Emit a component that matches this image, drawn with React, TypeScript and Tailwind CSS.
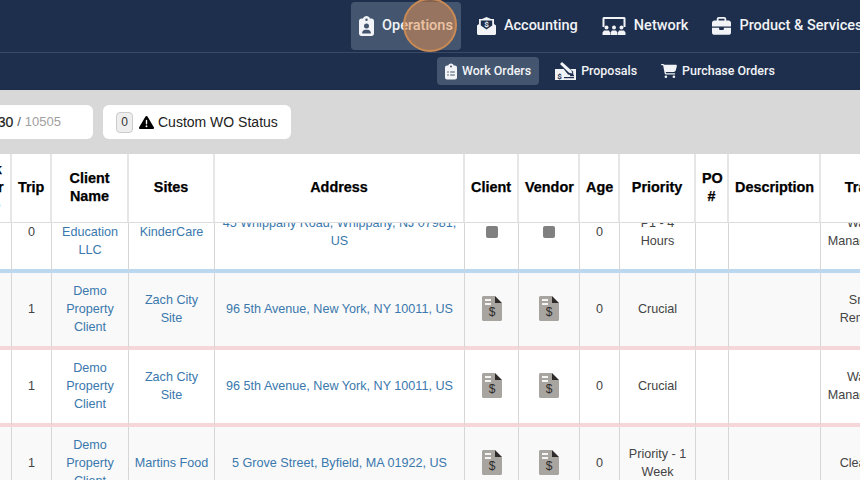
import { FaBriefcase, FaCartShopping, FaClipboardList, FaClipboardUser, FaTriangleExclamation } from "react-icons/fa6";

const colWidths = [54, 40, 77, 86, 250, 54, 61, 40, 76, 33, 92, 88];
const headers = ["Work Order Type", "Trip", "Client Name", "Sites", "Address", "Client", "Vendor", "Age", "Priority", "PO #", "Description", "Trade"];

const rows = [
  { trip: "0", client: "Early Education LLC", site: "KinderCare", address: "45 Whippany Road, Whippany, NJ 07981, US", priority: "P1 - 4 Hours", trade: "Waste Management", bg: "bg-white", line: "border-b-[#bcd8f0]", placeholder: true },
  { trip: "1", client: "Demo Property Client", site: "Zach City Site", address: "96 5th Avenue, New York, NY 10011, US", priority: "Crucial", trade: "Snow Removal", bg: "bg-[#f9f9f9]", line: "border-b-[#f5d6d9]", placeholder: false },
  { trip: "1", client: "Demo Property Client", site: "Zach City Site", address: "96 5th Avenue, New York, NY 10011, US", priority: "Crucial", trade: "Waste Management", bg: "bg-white", line: "border-b-[#f5d6d9]", placeholder: false },
  { trip: "1", client: "Demo Property Client", site: "Martins Food", address: "5 Grove Street, Byfield, MA 01922, US", priority: "Priority - 1 Week", trade: "Cleaning", bg: "bg-[#f9f9f9]", line: "border-b-[#f5d6d9]", placeholder: false },
];

function EnvelopeDollarIcon() {
  return (
    <svg width="19" height="18" viewBox="0 0 19 18" fill="#f1f3f6">
      <path d="M0 8.500 2 7V2L5 2 9.500 0 14 2h3v5l2 1.500V17l-1 1H1l-1-1z" />
      <path d="M3.800 3.500h11.400v5.100L9.500 12.600 3.800 8.600z" fill="#1e2f4d" />
      <text x="9.500" y="9.500" fontSize="8" fontWeight="700" textAnchor="middle" fill="#f1f3f6" fontFamily="Roboto, sans-serif">$</text>
    </svg>
  );
}

function NetworkIcon() {
  return (
    <svg width="24" height="18" viewBox="0 0 24 18" fill="#f1f3f6">
      <path d="M1.500 0h21l1 1v9h-2V2h-19v8h-2V1z" />
      <circle cx="4.500" cy="10.500" r="2" />
      <circle cx="12" cy="10.500" r="2" />
      <circle cx="19.500" cy="10.500" r="2" />
      <path d="M.5 18v-2.500L2 13.500h5L8 15.500V18zM8.500 18v-2.500L10 13.500h4l1.500 2V18zM16 18v-2.500l1-2h5l1.500 2V18z" />
    </svg>
  );
}

function CheckPenIcon() {
  return (
    <svg width="21" height="18" viewBox="0 0 21 18" fill="#f1f3f6">
      <path d="M0 7h21v11H0z" />
      <path d="M3.500 0.500 6.500-1 18 9.500 18.500 13.500 13 12.500z" fill="#1e2f4d" />
      <path d="M5 2l2-2 9.500 8.500.8 3-3.300-.8z" />
      <rect x="15" y="13" width="4" height="1.200" fill="#1e2f4d" />
      <rect x="9" y="15" width="10" height="1.200" fill="#1e2f4d" />
      <text x="4.500" y="16.500" fontSize="8" fontWeight="700" textAnchor="middle" fill="#1e2f4d" fontFamily="Roboto, sans-serif">$</text>
    </svg>
  );
}

function InvoiceIcon() {
  return (
    <svg width="20" height="25" viewBox="0 0 20 25" className="mx-auto block">
      <path d="M1 0h12v7h7v17l-1 1H1l-1-1V1z" fill="#a8a4a0" />
      <path d="M13 0l7 7h-7z" fill="#2f2b2b" />
      <rect x="3" y="3" width="6" height="2" fill="#f4f4f4" />
      <rect x="3" y="7" width="6" height="2" fill="#f4f4f4" />
      <text x="10" y="20" fontSize="12" textAnchor="middle" fill="#2f2b2b" fontFamily="Liberation Sans, sans-serif">$</text>
    </svg>
  );
}

function NavItem({ icon, label, active }: { icon: React.ReactNode; label: string; active?: boolean }) {
  return (
    <div className={`flex h-12 shrink-0 items-center gap-2 whitespace-nowrap rounded px-2 text-[14.5px] font-medium ${active ? "bg-[#44566f]" : ""}`}>
      {icon}
      <span>{label}</span>
    </div>
  );
}

function SubNavItem({ icon, label, active }: { icon: React.ReactNode; label: string; active?: boolean }) {
  return (
    <div className={`flex h-7 shrink-0 items-center gap-[5px] whitespace-nowrap rounded px-2 text-[12.45px] font-medium ${active ? "bg-[#44566f]" : ""}`}>
      {icon}
      <span>{label}</span>
    </div>
  );
}

function Colgroup() {
  return (
    <colgroup>
      {colWidths.map((w, i) => (
        <col key={i} style={{ width: w }} />
      ))}
    </colgroup>
  );
}

const tableWidth = colWidths.reduce((a, b) => a + b, 0);

export default function App() {
  return (
    <div className="relative flex h-[480px] w-[860px] flex-col overflow-hidden bg-white font-['Liberation_Sans',sans-serif] text-[12.6px] text-[#444]">
      <header className="h-[90px] shrink-0 bg-[#1e2f4d] font-['Roboto',sans-serif] text-[#f1f3f6]">
        <div className="flex h-[53px] gap-2 border-b border-[#3a4a66] pl-[351px] pt-0.5">
          <NavItem active icon={<FaClipboardUser size={20} className="w-[15px]" />} label="Operations" />
          <NavItem icon={<EnvelopeDollarIcon />} label="Accounting" />
          <NavItem icon={<NetworkIcon />} label="Network" />
          <NavItem icon={<FaBriefcase size={19} />} label="Product & Services" />
        </div>
        <div className="flex gap-2 pl-[437px] pt-1">
          <SubNavItem active icon={<FaClipboardList size={17} className="w-3" />} label="Work Orders" />
          <SubNavItem icon={<CheckPenIcon />} label="Proposals" />
          <SubNavItem icon={<FaCartShopping size={16} />} label="Purchase Orders" />
        </div>
      </header>

      {/* click marker from the recording */}
      <div className="absolute left-[403px] top-[-2px] size-[54px] rounded-full border-2 border-[#c98a55] bg-[#e8914f]/50" />

      <div className="flex h-16 shrink-0 items-center gap-2.5 bg-[#d8d8d8]">
        <div className="-ml-5 flex h-[34px] w-[113px] items-center justify-end rounded-md bg-white pr-8 text-[13px]">
          <span className="text-[14px] text-[#222] [-webkit-text-stroke:0.2px_#222]">30</span>
          <span className="mx-1 text-[#555]">/</span>
          <span className="text-[#a0a0a0]">10505</span>
        </div>
        <div className="flex h-[34px] w-[188px] items-center rounded-md bg-white pl-[13px]">
          <span className="flex h-[21px] w-[17px] items-center justify-center rounded-sm border border-[#ccc] bg-[#eee] text-xs text-[#333]">0</span>
          <FaTriangleExclamation size={15} className="ml-1.5 text-black" />
          <span className="ml-1 whitespace-nowrap text-sm text-[#222]">Custom WO Status</span>
        </div>
      </div>

      <div className="h-[69px] shrink-0 overflow-hidden">
        <table className="-ml-[42px] table-fixed border-separate border-spacing-0" style={{ width: tableWidth }}>
          <Colgroup />
          <thead>
            <tr>
              {headers.map((h) => (
                <th key={h} className="h-[69px] border-b border-r-2 border-b-[#dcdcdc] border-r-[#e6e6e6] px-1.5 pb-[3px] text-center align-middle text-[14.4px] font-bold leading-[18px] text-black [-webkit-text-stroke:0.25px_black]">
                  {h}
                </th>
              ))}
            </tr>
          </thead>
        </table>
      </div>

      <div className="min-h-0 flex-1 overflow-hidden">
        <table className="-ml-[42px] -mt-[27px] table-fixed border-separate border-spacing-0 leading-[18px]" style={{ width: tableWidth }}>
          <Colgroup />
          <tbody>
            {rows.map((row, i) => {
              const cell = `h-[77px] border-b-4 border-r border-r-[#d6d6d6] px-[5px] pb-[2px] text-center align-middle ${row.line} ${row.bg}`;
              return (
                <tr key={i}>
                  <td className={cell} />
                  <td className={cell}>{row.trip}</td>
                  <td className={`${cell} text-[#3a78ad]`}>{row.client}</td>
                  <td className={`${cell} text-[#3a78ad]`}>{row.site}</td>
                  <td className={`${cell} text-[#3a78ad]`}>{row.address}</td>
                  {[0, 1].map((k) => (
                    <td key={k} className={cell}>
                      {row.placeholder ? <div className="mx-auto size-3 rounded-[2px] bg-[#808080]" /> : <InvoiceIcon />}
                    </td>
                  ))}
                  <td className={cell}>0</td>
                  <td className={cell}>{row.priority}</td>
                  <td className={cell} />
                  <td className={cell} />
                  <td className={cell}>{row.trade}</td>
                </tr>
              );
            })}
          </tbody>
        </table>
      </div>
    </div>
  );
}
